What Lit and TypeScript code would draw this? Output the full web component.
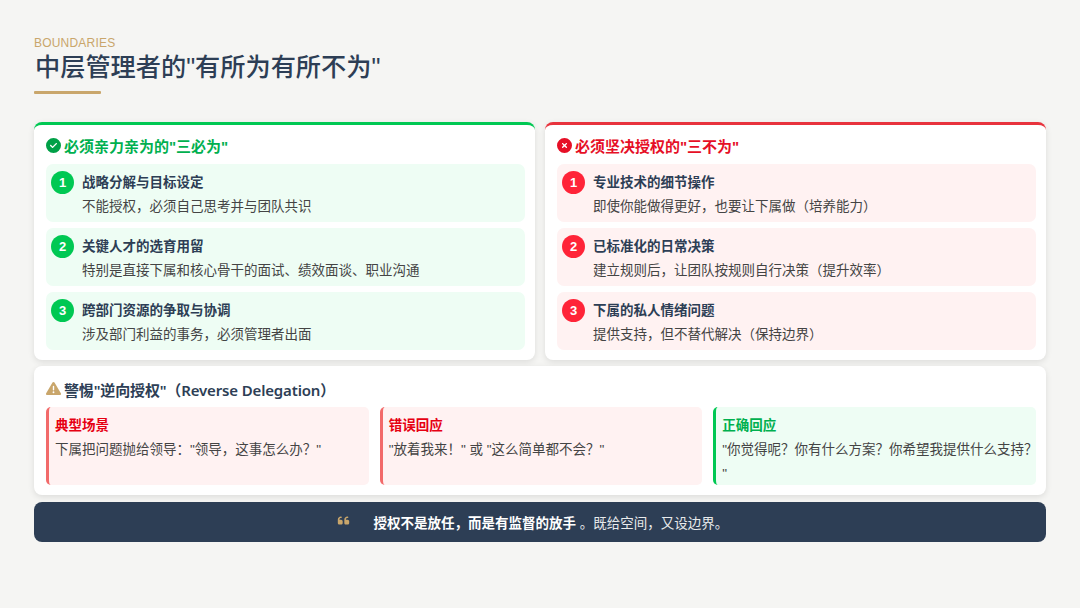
import { LitElement, html, css } from "lit";
import { customElement } from "lit/decorators.js";

const CHECK = "M256 512A256 256 0 1 0 256 0a256 256 0 1 0 0 512zM369 209L241 337c-9.4 9.4-24.6 9.4-33.9 0l-64-64c-9.4-9.4-9.4-24.6 0-33.9s24.6-9.4 33.9 0l47 47L335 175c9.4-9.4 24.6-9.4 33.9 0s9.4 24.6 0 33.9z";
const XMARK = "M256 512A256 256 0 1 0 256 0a256 256 0 1 0 0 512zM175 175c9.4-9.4 24.6-9.4 33.9 0l47 47 47-47c9.4-9.4 24.6-9.4 33.9 0s9.4 24.6 0 33.9l-47 47 47 47c9.4 9.4 9.4 24.6 0 33.9s-24.6 9.4-33.9 0l-47-47-47 47c-9.4 9.4-24.6 9.4-33.9 0s-9.4-24.6 0-33.9l47-47-47-47c-9.4-9.4-9.4-24.6 0-33.9z";
const WARN = "M256 32c14.2 0 27.3 7.5 34.5 19.8l216 368c7.3 12.4 7.3 27.7 .2 40.1S486.3 480 472 480H40c-14.3 0-27.6-7.7-34.7-20.1s-7-27.8 .2-40.1l216-368C228.7 39.5 241.8 32 256 32zm0 128c-13.3 0-24 10.7-24 24V296c0 13.3 10.7 24 24 24s24-10.7 24-24V184c0-13.3-10.7-24-24-24zm32 224a32 32 0 1 0 -64 0 32 32 0 1 0 64 0z";
const QUOTE = "M0 216C0 149.7 53.7 96 120 96h8c17.7 0 32 14.3 32 32s-14.3 32-32 32h-8c-30.9 0-56 25.1-56 56v8h64c35.3 0 64 28.7 64 64v64c0 35.3-28.7 64-64 64H64c-35.3 0-64-28.7-64-64V216zm256 0c0-66.3 53.7-120 120-120h8c17.7 0 32 14.3 32 32s-14.3 32-32 32h-8c-30.9 0-56 25.1-56 56v8h64c35.3 0 64 28.7 64 64v64c0 35.3-28.7 64-64 64H320c-35.3 0-64-28.7-64-64V216z";

const icon = (d: string, cls: string, vb = "0 0 512 512") => html`<svg class=${cls} viewBox=${vb} aria-hidden="true"><path d=${d} fill="currentColor"></path></svg>`;

const must = [
  ["战略分解与目标设定", "不能授权，必须自己思考并与团队共识"],
  ["关键人才的选育用留", "特别是直接下属和核心骨干的面试、绩效面谈、职业沟通"],
  ["跨部门资源的争取与协调", "涉及部门利益的事务，必须管理者出面"],
];
const mustNot = [
  ["专业技术的细节操作", "即使你能做得更好，也要让下属做（培养能力）"],
  ["已标准化的日常决策", "建立规则后，让团队按规则自行决策（提升效率）"],
  ["下属的私人情绪问题", "提供支持，但不替代解决（保持边界）"],
];

@customElement("app-root")
export class AppRoot extends LitElement {
  static styles = css`
    :host {
      display: block;
      width: 1080px;
      height: 608px;
      overflow: hidden;
      background: #f5f5f3;
      font-family: "Liberation Sans", "Noto Sans CJK SC", sans-serif;
      color: #2d3e55;
    }
    .page { box-sizing: border-box; height: 608px; padding: 36px 34px 0; display: flex; flex-direction: column; }
    .eyebrow { font-size: 12px; line-height: 14px; color: #c9a66b; letter-spacing: 0.2px; }
    h1 { margin: 0; font-size: 25.2px; line-height: 34px; font-weight: 500; color: #2d3e55; padding-left: 1px; }
    .rule { width: 67px; height: 3px; background: #c9a66b; margin-top: 7px; border-radius: 1px; }
    .cols { display: grid; grid-template-columns: 501px 501px; gap: 10px; margin-top: 28px; }
    .card { background: #fff; border-radius: 8px; box-shadow: 0 2px 6px rgba(0,0,0,.1); box-sizing: border-box; }
    .col { border-top: 3px solid; height: 238px; padding: 5px 10px 10px 12px; }
    .col.good { border-color: #00c853; }
    .col.bad { border-color: #e8333d; }
    .head { display: flex; align-items: center; gap: 3px; font-size: 15px; line-height: 24px; font-weight: 700; height: 34px; box-sizing: border-box; }
    .good .head { color: #00b04f; }
    .bad .head { color: #e60f26; }
    .hicon { width: 15px; height: 15px; flex: none; margin-top: -4px; }
    .good .hicon { color: #00a047; }
    .bad .hicon { color: #e60f26; }
    .list { display: flex; flex-direction: column; gap: 6px; }
    .item { height: 58px; border-radius: 7px; box-sizing: border-box; padding: 6px 5px; display: flex; gap: 8px; }
    .good .item { background: #eefdf4; }
    .bad .item { background: #fff2f2; }
    .num { width: 23px; height: 23px; border-radius: 50%; color: #fff; font-size: 13px; font-weight: 700; display: flex; align-items: center; justify-content: center; flex: none; margin-top: 1px; }
    .good .num { background: #00c853; }
    .bad .num { background: #ff2438; }
    .texts { display: flex; flex-direction: column; margin-top: 1px; }
    .t { font-size: 13.5px; line-height: 24px; font-weight: 700; color: #2d3e55; }
    .d { font-size: 13.5px; line-height: 24px; color: #444; }
    .warn { height: 129px; margin-top: 6px; padding: 9px 10px 0 12px; }
    .whead { display: flex; align-items: center; gap: 3px; font-family: "Noto Sans", "Noto Sans CJK SC", sans-serif; font-size: 15px; line-height: 24px; font-weight: 600; letter-spacing: -0.15px; color: #2d3e55; height: 32px; padding-bottom: 3px; box-sizing: border-box; }
    .wicon { width: 15px; height: 15px; color: #c9a66b; flex: none; margin-top: -2px; }
    .boxes { display: grid; grid-template-columns: repeat(3, 1fr); gap: 11px; }
    .box { height: 78px; border-left: 3px solid; border-radius: 5px; box-sizing: border-box; padding: 7px 0 0 6px; }
    .box.r { background: #fff2f2; border-color: #f26a6a; }
    .box.g { background: #eefdf4; border-color: #00c853; }
    .bt { font-size: 13.5px; line-height: 24px; font-weight: 700; }
    .r .bt { color: #e60012; }
    .g .bt { color: #00b04f; }
    .bd { font-size: 13.5px; line-height: 24px; color: #444; margin-right: -3px; }
    .banner { margin-top: 7px; height: 40px; background: #2d3e55; border-radius: 8px; display: flex; align-items: center; justify-content: center; gap: 24px; color: #e8eaec; font-size: 13.5px; padding-right: 15px; }
    .banner b { color: #fff; font-weight: 700; }
    .qicon { width: 13px; height: 13px; color: #c9a66b; flex: none; margin-top: -3px; }
  `;

  private renderItems(rows: string[][]) {
    return html`<div class="list">${rows.map((r, i) => html`
      <div class="item">
        <div class="num">${i + 1}</div>
        <div class="texts"><div class="t">${r[0]}</div><div class="d">${r[1]}</div></div>
      </div>`)}</div>`;
  }

  render() {
    return html`<div class="page">
      <div class="eyebrow">BOUNDARIES</div>
      <h1>中层管理者的"有所为有所不为"</h1>
      <div class="rule"></div>
      <div class="cols">
        <section class="card col good">
          <div class="head">${icon(CHECK, "hicon")}<span>必须亲力亲为的"三必为"</span></div>
          ${this.renderItems(must)}
        </section>
        <section class="card col bad">
          <div class="head">${icon(XMARK, "hicon")}<span>必须坚决授权的"三不为"</span></div>
          ${this.renderItems(mustNot)}
        </section>
      </div>
      <section class="card warn">
        <div class="whead">${icon(WARN, "wicon")}<span>警惕"逆向授权"（Reverse Delegation）</span></div>
        <div class="boxes">
          <div class="box r"><div class="bt">典型场景</div><div class="bd">下属把问题抛给领导："领导，这事怎么办？"</div></div>
          <div class="box r"><div class="bt">错误回应</div><div class="bd">"放着我来！" 或 "这么简单都不会？"</div></div>
          <div class="box g"><div class="bt">正确回应</div><div class="bd">"你觉得呢？你有什么方案？你希望我提供什么支持？<wbr>"</div></div>
        </div>
      </section>
      <div class="banner">${icon(QUOTE, "qicon", "0 0 448 512")}<span><b>授权不是放任，而是有监督的放手</b> 。既给空间，又设边界。</span></div>
    </div>`;
  }
}
